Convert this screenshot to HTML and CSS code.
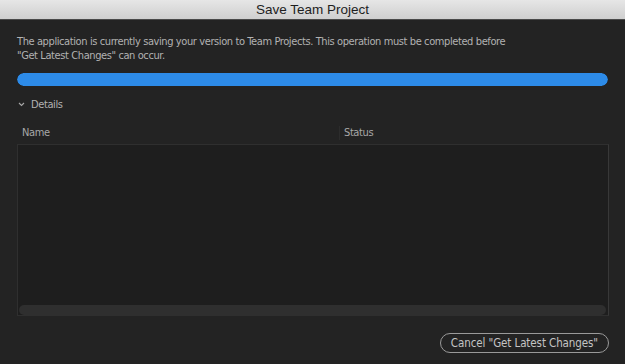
FILE: index.html
```html
<!DOCTYPE html>
<html lang="en">
<head>
    <meta charset="UTF-8">
    <title>Save Team Project</title>
    <link rel="stylesheet" href="styles.css">
</head>
<body>
    <div class="dialog">
        <div class="title-bar">Save Team Project</div>

        <div class="dialog-body">
            <p class="message">The application is currently saving your version to Team Projects. This operation must be completed before <span class="nowrap">"Get Latest Changes"</span> can occur.</p>

            <div class="progress">
                <div class="progress-fill" style="width: 100%"></div>
            </div>

            <div class="details-toggle">
                <svg class="chevron" width="7" height="5" viewBox="0 0 7 5">
                    <path d="M1 1 L3.5 3.5 L6 1" fill="none" stroke="#a8a8a8" stroke-width="1.1"/>
                </svg>
                <span>Details</span>
            </div>

            <div class="table-head">
                <div class="col col-name">Name</div>
                <div class="col col-status">Status</div>
            </div>

            <div class="table-box">
                <div class="table-rows">
                    <!-- rows go here -->
                </div>
                <div class="scroll-track"></div>
            </div>

            <div class="actions">
                <button class="cancel-button">Cancel "Get Latest Changes"</button>
            </div>
        </div>
    </div>
</body>
</html>
```

FILE: styles.css
```css
* {
    margin: 0;
    padding: 0;
    box-sizing: border-box;
}

body {
    font-family: 'DejaVu Sans Condensed', 'DejaVu Sans', sans-serif;
    font-size: 11px;
    letter-spacing: -0.4px;
    background: #232323;
    width: 625px;
    height: 364px;
    overflow: hidden;
}

.dialog {
    display: flex;
    flex-direction: column;
    height: 100%;
}

.title-bar {
    height: 20px;
    background: linear-gradient(#e6e6e6, #cfcfcf);
    border-bottom: 1px solid #4a4a4a;
    color: #1e1e1e;
    font-family: 'Liberation Sans', sans-serif;
    font-size: 13.5px;
    letter-spacing: 0;
    line-height: 19px;
    text-align: center;
}

.dialog-body {
    padding: 15px 17px 0 17px;
    display: flex;
    flex-direction: column;
}

.message {
    color: #b2b2b2;
    line-height: 14px;
    max-width: 570px;
}

.nowrap {
    white-space: nowrap;
}

.progress {
    margin-top: 10px;
    height: 13px;
    border-radius: 7px;
    background: #1c1c1c;
    overflow: hidden;
}

.progress-fill {
    height: 100%;
    background: #2d8be8;
    border-radius: 7px;
}

.details-toggle {
    display: flex;
    align-items: center;
    gap: 6px;
    margin-top: 11px;
    padding-left: 1px;
    color: #b2b2b2;
    height: 14px;
}

.table-head {
    display: flex;
    margin-top: 15px;
    height: 14px;
    color: #a8a8a8;
    line-height: 14px;
}

.col-name {
    width: 322px;
    padding-left: 5px;
}

.col-status {
    border-left: 1px solid #2c2c2c;
    padding-left: 4px;
}

.table-box {
    margin-top: 4px;
    height: 172px;
    width: 592px;
    background: #1e1e1e;
    border: 1px solid #2f2f2f;
    border-right-color: #383838;
    display: flex;
    flex-direction: column;
    padding: 0 2px 0 1px;
}

.table-rows {
    flex: 1;
}

.scroll-track {
    height: 10px;
    background: #2f2f2f;
    border-radius: 5px;
}

.actions {
    display: flex;
    justify-content: flex-end;
    margin-top: 17px;
}

.cancel-button {
    font-family: inherit;
    font-size: 11.5px;
    letter-spacing: -0.1px;
    background: transparent;
    color: #c4c4c4;
    height: 20px;
    padding: 0 10px;
    border: 1px solid #9a9a9a;
    border-radius: 10px;
    margin-right: -1px;
}
```
